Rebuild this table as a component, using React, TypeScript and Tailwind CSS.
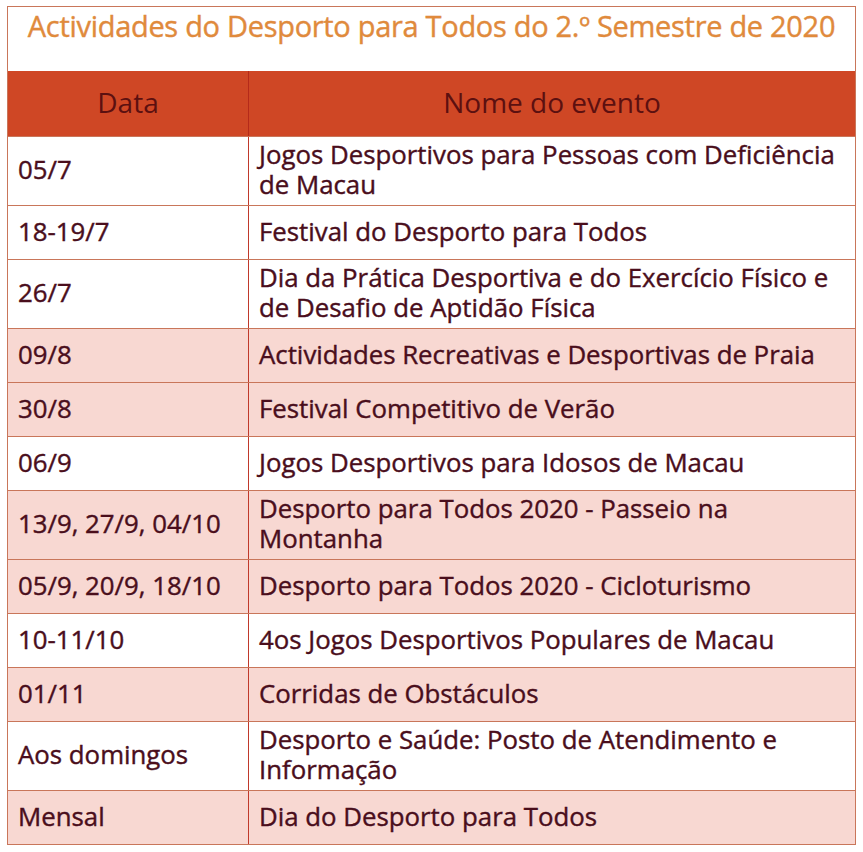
import React from 'react';

type Row = { date: string; name: string[]; pink?: boolean };

const rows: Row[] = [
  { date: '05/7', name: ['Jogos Desportivos para Pessoas com Deficiência', 'de Macau'] },
  { date: '18-19/7', name: ['Festival do Desporto para Todos'] },
  { date: '26/7', name: ['Dia da Prática Desportiva e do Exercício Físico e', 'de Desafio de Aptidão Física'] },
  { date: '09/8', name: ['Actividades Recreativas e Desportivas de Praia'], pink: true },
  { date: '30/8', name: ['Festival Competitivo de Verão'], pink: true },
  { date: '06/9', name: ['Jogos Desportivos para Idosos de Macau'] },
  { date: '13/9, 27/9, 04/10', name: ['Desporto para Todos 2020 - Passeio na', 'Montanha'], pink: true },
  { date: '05/9, 20/9, 18/10', name: ['Desporto para Todos 2020 - Cicloturismo'], pink: true },
  { date: '10-11/10', name: ['4os Jogos Desportivos Populares de Macau'] },
  { date: '01/11', name: ['Corridas de Obstáculos'], pink: true },
  { date: 'Aos domingos', name: ['Desporto e Saúde: Posto de Atendimento e', 'Informação'] },
  { date: 'Mensal', name: ['Dia do Desporto para Todos'], pink: true },
];

export default function App() {
  return (
    <div className="w-[863px] h-[852px] bg-white pt-[6px] pl-[7px]" style={{ fontFamily: '"Open Sans", "Noto Sans", sans-serif' }}>
      <div className="w-[849px] border border-[#c9765a]">
        <div className="h-[64px] flex items-start justify-center text-[29px] leading-[38px] text-[#e08a3c] tracking-[-0.3px] whitespace-nowrap [-webkit-text-stroke:0.4px_#e08a3c]">
          Actividades do Desporto para Todos do 2.º Semestre de 2020
        </div>
        <div className="flex h-[65px] bg-[#cf4725] text-[#5c1010] text-[28px]">
          <div className="w-[241px] flex items-center justify-center pb-[3px] border-r border-[#b52a1a]">Data</div>
          <div className="flex-1 flex items-center justify-center pb-[3px]">Nome do evento</div>
        </div>
        {rows.map((r, i) => (
          <div
            key={i}
            className={`flex border-t border-[#c9765a] text-[#4a0e1c] text-[25.8px] leading-[30px] whitespace-nowrap [-webkit-text-stroke:0.4px_#4a0e1c] ${
              r.pink ? 'bg-[#f8d8d2]' : 'bg-white'
            } ${r.name.length > 1 ? 'h-[69px]' : 'h-[54px]'}`}
          >
            <div className="w-[241px] flex items-center px-[10px] pb-[4px] border-r border-[#c0392b]">{r.date}</div>
            <div className="flex-1 flex flex-col justify-center px-[10px] pb-[4px]">
              {r.name.map((l, j) => (
                <span key={j}>{l}</span>
              ))}
            </div>
          </div>
        ))}
      </div>
    </div>
  );
}
